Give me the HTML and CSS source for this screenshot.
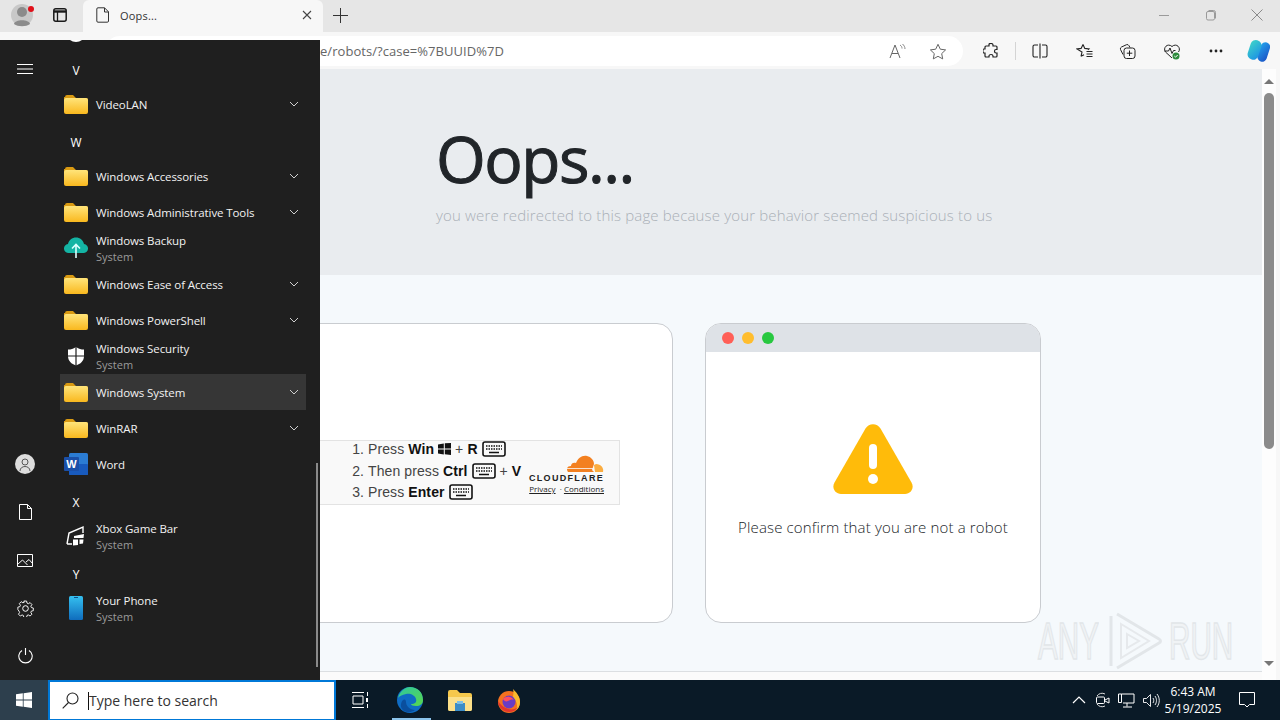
FILE: index.html
```html
<!DOCTYPE html>
<html lang="en">
<head>
    <meta charset="UTF-8">
    <title>Oops...</title>
    <link rel="stylesheet" href="styles.css">
</head>
<body>
    <svg class="defs" width="0" height="0">
        <defs>
            <linearGradient id="folderFill" x1="0" y1="0" x2="0" y2="1">
                <stop offset="0" stop-color="#ffe47a"/>
                <stop offset="1" stop-color="#f9b81e"/>
            </linearGradient>
            <symbol id="folder" viewBox="0 0 24 20">
                <path d="M1 3a2 2 0 0 1 2-2h6l3 3h10a2 2 0 0 1 2 2v4H0V3z" fill="#d99a12"/>
                <rect x="0" y="4" width="24" height="16" rx="2" fill="url(#folderFill)"/>
            </symbol>
            <symbol id="chevron" viewBox="0 0 10 6">
                <path d="M1 1l4 4 4-4" fill="none" stroke="#cfcfcf" stroke-width="1"/>
            </symbol>
            <symbol id="keyboard" viewBox="0 0 24 16">
                <rect x="1" y="1" width="22" height="14" rx="2" fill="none" stroke="#111" stroke-width="1.6"/>
                <path d="M4 5h16M4 8h16" stroke="#111" stroke-width="1.4" stroke-dasharray="1.5 1"/>
                <path d="M7 11.5h10" stroke="#111" stroke-width="1.5"/>
            </symbol>
        </defs>
    </svg>

    <div class="tabstrip">
        <div class="profile">
            <svg width="24" height="28" viewBox="0 0 24 28"><circle cx="11" cy="14" r="11" fill="#c8c8c8"/><circle cx="11" cy="11" r="5" fill="#8b8b8b"/><path d="M3 23c1-5 15-5 16 0-4 3-12 3-16 0z" fill="#8b8b8b"/></svg>
            <span class="profile-dot"></span>
        </div>
        <svg class="tab-actions" width="16" height="16" viewBox="0 0 16 16"><rect x="1.8" y="1.8" width="12.4" height="12.4" rx="2" fill="none" stroke="#1a1a1a" stroke-width="1.5"/><path d="M2 4.5h12" stroke="#1a1a1a" stroke-width="2.4"/><path d="M5.5 5v9" stroke="#1a1a1a" stroke-width="1.3"/></svg>
        <div class="tab">
            <svg width="14" height="16" viewBox="0 0 14 16"><path d="M2 .8h6.5l4 4V14a1.2 1.2 0 0 1-1.2 1.2H2A1.2 1.2 0 0 1 .8 14V2A1.2 1.2 0 0 1 2 .8zM8.500 .8V5h4" fill="none" stroke="#333" stroke-width="1"/></svg>
            <span class="tab-title">Oops...</span>
            <svg class="tab-close" width="10" height="10" viewBox="0 0 10 10"><path d="M1 1l8 8M9 1l-8 8" stroke="#444" stroke-width="1.1"/></svg>
        </div>
        <svg class="new-tab" width="15" height="15" viewBox="0 0 15 15"><path d="M7.500 0v15M0 7.500h15" stroke="#333" stroke-width="1"/></svg>
        <div class="window-buttons">
            <svg width="12" height="12" viewBox="0 0 12 12"><path d="M1 6.500h10" stroke="#9a9a9a"/></svg>
            <svg width="12" height="12" viewBox="0 0 12 12"><rect x="1.500" y="2.500" width="8" height="8.500" rx="1.500" fill="none" stroke="#9a9a9a"/><path d="M3.500 1.500h5a2 2 0 0 1 2 2v6" fill="none" stroke="#9a9a9a"/></svg>
            <svg class="win-close" width="12" height="12" viewBox="0 0 12 12"><path d="M.5.5l11 11M11.500.5l-11 11" stroke="#8a8a8a"/></svg>
        </div>
    </div>

    <div class="toolbar">
        <div class="address">
            <span class="url">e/robots/?case=%7BUUID%7D</span>
            <svg class="address-icon read" width="18" height="16" viewBox="0 0 18 16"><path d="M1 15L6 2l5 13M3 10.500h6" fill="none" stroke="#666" stroke-width="1"/><path d="M11 2c1.500 1 2 2 2 3.500M13.500 1c1.500 1.300 2.500 3 2.500 5" fill="none" stroke="#888"/></svg>
            <svg class="address-icon" width="18" height="17" viewBox="0 0 18 17"><path d="M9 1.300l2.300 4.900 5.300.7-3.900 3.700 1 5.300L9 13.300l-4.700 2.600 1-5.300L1.400 6.900l5.300-.7z" fill="none" stroke="#666" stroke-width="1"/></svg>
        </div>
        <div class="toolbar-icons">
            <svg class="tool-puzzle" width="16" height="16" viewBox="0 0 16 16"><path d="M6 1.500c0-1.500 4-1.500 4 .5v1h3a1 1 0 0 1 1 1v2.500h-1c-2 0-2 3.500 0 3.500h1v3a1 1 0 0 1-1 1h-3v-1c0-2-4-2-4 0v1H3a1 1 0 0 1-1-1v-3H1c-1.500 0-1.500-4 0-4h1V4a1 1 0 0 1 1-1h3z" fill="none" stroke="#222" stroke-width="1.200"/></svg>
            <span class="tool-sep"></span>
            <svg class="tool-split" width="16" height="16" viewBox="0 0 16 16"><path d="M6 2H2.500A1.500 1.500 0 0 0 1 3.500v9A1.500 1.500 0 0 0 2.500 14H6M10 2h3.500A1.500 1.500 0 0 1 15 3.500v9a1.500 1.500 0 0 1-1.500 1.500H10M8 .5v15" fill="none" stroke="#222" stroke-width="1.100"/></svg>
            <svg class="tool-favs" width="17" height="16" viewBox="0 0 17 16"><path d="M7 1.500l1.800 3.900 4.200.5-1 1M5 13.300L6 9 .9 6l4.200-.6L7 1.500M5 13.300l3-1.600" fill="none" stroke="#222" stroke-width="1.100"/><path d="M10.500 8.500h6M10.500 11h6M10.500 13.500h6" stroke="#222"/></svg>
            <svg class="tool-coll" width="17" height="16" viewBox="0 0 17 16"><path d="M4 11.500L1.500 6.500a2 2 0 0 1 1-2.500l5-2.300a2 2 0 0 1 2.500 1L11 4.500" fill="none" stroke="#222"/><rect x="5" y="5" width="11" height="10.500" rx="2.500" fill="#f7f7f7" stroke="#222"/><path d="M10.500 7.500v5.500M7.800 10.200h5.500" stroke="#222"/></svg>
            <svg class="tool-health" width="18" height="17" viewBox="0 0 18 17"><path d="M9 15L2.500 9C-.5 5 4.500-.5 9 3.500 13.500-.5 18.500 5 15.500 9" fill="none" stroke="#222"/><path d="M1.500 8h4l1.500-3 2 5.500 1.500-3h2" fill="none" stroke="#222"/><circle cx="13" cy="13" r="3.500" fill="#2e8b3d"/><path d="M11.300 13l1.200 1.200 2.200-2.200" fill="none" stroke="#fff"/></svg>
            <svg class="tool-more" width="14" height="4" viewBox="0 0 14 4"><circle cx="2" cy="2" r="1.400" fill="#222"/><circle cx="7" cy="2" r="1.400" fill="#222"/><circle cx="12" cy="2" r="1.400" fill="#222"/></svg>
            <svg class="tool-copilot" width="24" height="24" viewBox="0 0 24 24">
                <defs>
                    <linearGradient id="copA" x1="0" y1="0" x2="1" y2="1"><stop offset="0" stop-color="#3fd6c8"/><stop offset="1" stop-color="#1b8fe6"/></linearGradient>
                    <linearGradient id="copB" x1="0" y1="0" x2="1" y2="1"><stop offset="0" stop-color="#22a5ee"/><stop offset="1" stop-color="#1a4fc4"/></linearGradient>
                </defs>
                <rect x="13" y="3" width="9.500" height="20" rx="4.700" transform="rotate(18 18 13)" fill="url(#copB)"/>
                <rect x="3" y="1" width="11" height="20" rx="5.200" transform="rotate(18 9 11)" fill="url(#copA)"/>
            </svg>
        </div>
    </div>

    <div class="viewport">
        <div class="page">
            <div class="hero">
                <h1>Oops...</h1>
                <p class="lead">you were redirected to this page because your behavior seemed suspicious to us</p>
            </div>
            <div class="cards">
                <div class="card card-captcha">
                    <div class="captcha">
                        <span class="captcha-spinner"></span>
                        <ol class="steps">
                            <li>Press <b>Win</b> <svg class="win-mini" width="13" height="12" viewBox="0 0 13 12"><path d="M0 1.500l5.800-1v5H0zM6.800.3L13 0v5.500H6.800zM0 6.500h5.800v5L0 10.500zM6.800 6.500H13V12l-6.200-.8z" fill="#111"/></svg> + <b>R</b> <svg class="key" width="24" height="16"><use href="#keyboard"/></svg></li>
                            <li>Then press <b>Ctrl</b> <svg class="key" width="24" height="16"><use href="#keyboard"/></svg> + <b>V</b></li>
                            <li>Press <b>Enter</b> <svg class="key" width="24" height="16"><use href="#keyboard"/></svg></li>
                        </ol>
                        <div class="cf">
                            <svg width="38" height="18" viewBox="0 0 38 18"><path d="M28 17H2c-2-3-1-6 3-6 0-3 3-4 5-3 2-5 6-8 11-7 4 1 7 4 7 8l-2 6z" fill="#f38020"/><path d="M29 17h8c1-4-2-8-7-8l-2 1z" fill="#fbad41"/><path d="M0 13.500h27" stroke="#f9f9f9" stroke-width=".8"/></svg>
                            <span class="cf-name">CLOUDFLARE</span>
                            <span class="cf-links"><u>Privacy</u> &nbsp;· <u>Conditions</u></span>
                        </div>
                    </div>
                </div>
                <div class="card card-robot">
                    <div class="card-bar">
                        <span class="dot dot-red"></span>
                        <span class="dot dot-yellow"></span>
                        <span class="dot dot-green"></span>
                    </div>
                    <div class="card-body">
                        <svg width="80" height="70" viewBox="0 0 80 70"><path d="M32.500 4.500c3.400-5.800 11.600-5.800 15 0l31 54c3 5.300-.3 11.500-6.500 11.500H8c-6.200 0-9.500-6.200-6.500-11.500z" fill="#ffbb0a"/><rect x="36" y="20" width="8" height="25" rx="4" fill="#fff"/><circle cx="40" cy="55" r="5" fill="#fff"/></svg>
                        <p>Please confirm that you are not a robot</p>
                    </div>
                </div>
            </div>
        </div>
        <div class="scrollbar">
            <span class="arrow-up"></span>
            <span class="thumb"></span>
            <span class="arrow-down"></span>
        </div>
        <div class="window-edge"></div>

        <div class="watermark">
            <span>ANY</span>
            <svg width="56" height="62" viewBox="0 0 56 62"><path d="M4 6v50M10 4l42 25c2 1 2 3 0 4L10 58" fill="none" stroke="#e2e6e9" stroke-width="3"/><path d="M14 14l28 17-28 17zM20 24l12 7-12 7z" fill="none" stroke="#e6e9ec" stroke-width="2"/></svg>
            <span>RUN</span>
        </div>
    </div>

    <div class="start-menu">
        <div class="rail">
            <svg class="rail-burger" width="16" height="10" viewBox="0 0 16 10"><path d="M0 .5h16M0 5h16M0 9.500h16" stroke="#fff"/></svg>
            <div class="rail-bottom">
                <span class="rail-btn"><span class="avatar"><svg width="12" height="13" viewBox="0 0 12 13"><circle cx="6" cy="4" r="3" fill="none" stroke="#555"/><path d="M1 13c0-6 10-6 10 0" fill="none" stroke="#555"/></svg></span></span>
                <span class="rail-btn"><svg width="13" height="16" viewBox="0 0 13 16"><path d="M.5.500h8l4 4v11H.5zM8.500.5v4h4" fill="none" stroke="#fff"/></svg></span>
                <span class="rail-btn"><svg width="16" height="13" viewBox="0 0 16 13"><path d="M.5.500h15v12H.5zM1 10l4.500-4 5 5M9 8l3-2.500 3.500 4" fill="none" stroke="#fff"/></svg></span>
                <span class="rail-btn"><svg width="17" height="17" viewBox="0 0 17 17"><circle cx="8.500" cy="8.500" r="2.800" fill="none" stroke="#fff"/><path d="M7 .7h3l.4 2.200 1.500.7 1.900-1.200 2 2.100-1.200 1.800.6 1.500 2.100.5v2.900l-2.100.4-.6 1.500 1.200 1.900-2 2-1.900-1.200-1.500.6-.4 2.200H7l-.5-2.200-1.400-.6-1.900 1.200-2-2 1.200-1.900-.7-1.500L.5 10V7.300l2.200-.5.600-1.500L2.100 3.500l2-2.100L6 2.600l1.500-.6z" transform="translate(.4 .4) scale(.92)" fill="none" stroke="#fff"/></svg></span>
                <span class="rail-btn"><svg width="15" height="16" viewBox="0 0 15 16"><path d="M7.500 0v7M4 2.500a6.700 6.700 0 1 0 7 0" fill="none" stroke="#fff" stroke-width="1.100"/></svg></span>
            </div>
        </div>
        <div class="app-list">
            <span class="clipped-icon"></span>
            <div class="letter">V</div>
            <div class="app"><svg class="app-icon" width="24" height="20"><use href="#folder"/></svg><span class="app-name">VideoLAN</span><svg class="chev" width="10" height="6"><use href="#chevron"/></svg></div>
            <div class="letter">W</div>
            <div class="app"><svg class="app-icon" width="24" height="20"><use href="#folder"/></svg><span class="app-name">Windows Accessories</span><svg class="chev" width="10" height="6"><use href="#chevron"/></svg></div>
            <div class="app"><svg class="app-icon" width="24" height="20"><use href="#folder"/></svg><span class="app-name">Windows Administrative Tools</span><svg class="chev" width="10" height="6"><use href="#chevron"/></svg></div>
            <div class="app">
                <svg class="app-icon" width="24" height="22" viewBox="0 0 24 22"><path d="M6 16H5a4.500 4.500 0 0 1-1-9C5 3 8 .5 12 .5s7 2.500 8 6.500a4.500 4.500 0 0 1-1 9z" fill="#14b4a4"/><path d="M12 21V8M8 11.500L12 7.500l4 4" fill="none" stroke="#dff" stroke-width="1.600"/></svg>
                <span class="app-text"><span class="app-name">Windows Backup</span><span class="app-sub">System</span></span>
            </div>
            <div class="app"><svg class="app-icon" width="24" height="20"><use href="#folder"/></svg><span class="app-name">Windows Ease of Access</span><svg class="chev" width="10" height="6"><use href="#chevron"/></svg></div>
            <div class="app"><svg class="app-icon" width="24" height="20"><use href="#folder"/></svg><span class="app-name">Windows PowerShell</span><svg class="chev" width="10" height="6"><use href="#chevron"/></svg></div>
            <div class="app">
                <svg class="app-icon" width="24" height="20" viewBox="0 0 24 20"><path d="M12 1c3 2 5 2.500 8 2.500V10c0 5-3.500 8-8 9.500C7.500 18 4 15 4 10V3.500C7 3.500 9 3 12 1z" fill="#fff"/><path d="M12 1v19M4 10h16" stroke="#1f1f1f" stroke-width="1.200"/></svg>
                <span class="app-text"><span class="app-name">Windows Security</span><span class="app-sub">System</span></span>
            </div>
            <div class="app app-hover"><svg class="app-icon" width="24" height="20"><use href="#folder"/></svg><span class="app-name">Windows System</span><svg class="chev" width="10" height="6"><use href="#chevron"/></svg></div>
            <div class="app"><svg class="app-icon" width="24" height="20"><use href="#folder"/></svg><span class="app-name">WinRAR</span><svg class="chev" width="10" height="6"><use href="#chevron"/></svg></div>
            <div class="app">
                <svg class="app-icon" width="24" height="24" viewBox="0 0 24 24"><rect x="5" y="1" width="19" height="22" rx="1.500" fill="#2b7cd3"/><rect x="5" y="12" width="19" height="11" rx="1" fill="#185abd"/><rect x="0" y="5" width="15" height="14" rx="1" fill="#1a4fa8"/><text x="7.500" y="16" text-anchor="middle" class="word-w">W</text></svg>
                <span class="app-name">Word</span>
            </div>
            <div class="letter">X</div>
            <div class="app">
                <svg class="app-icon" width="24" height="24" viewBox="0 0 24 24"><path d="M3 20l2-11L19 3v6M3 20h5" fill="none" stroke="#fff" stroke-width="1.400"/><path d="M10 12l10-2-.5 4H10zM9 15.500h5V21l-5 .5zM15.500 15.500h4l-.5 4-3.500.5z" fill="#fff"/></svg>
                <span class="app-text"><span class="app-name">Xbox Game Bar</span><span class="app-sub">System</span></span>
            </div>
            <div class="letter">Y</div>
            <div class="app">
                <svg class="app-icon" width="24" height="26" viewBox="0 0 24 26">
                    <defs><linearGradient id="phoneFill" x1="0" y1="0" x2="0" y2="1"><stop offset="0" stop-color="#35c0f0"/><stop offset="1" stop-color="#0f6cbd"/></linearGradient></defs>
                    <rect x="5" y="1" width="14" height="24" rx="1.500" fill="url(#phoneFill)"/><path d="M10 2.500h4" stroke="#0e4f86"/>
                </svg>
                <span class="app-text"><span class="app-name">Your Phone</span><span class="app-sub">System</span></span>
            </div>
        </div>
        <span class="menu-scroll"></span>
    </div>

    <div class="taskbar">
        <div class="start-btn">
            <svg width="16" height="16" viewBox="0 0 16 16"><path d="M0 2.300l6.800-1v6.200H0zM7.600 1.200L16 0v7.500H7.600zM0 8.400h6.800v6.300L0 13.700zM7.600 8.400H16V16l-8.400-1.200z" fill="#fff"/></svg>
        </div>
        <div class="search">
            <svg width="17" height="17" viewBox="0 0 17 17"><circle cx="10.500" cy="6.500" r="5.500" fill="none" stroke="#222" stroke-width="1.100"/><path d="M6.500 10.500L.7 16.300" stroke="#222" stroke-width="1.100"/></svg>
            <span class="caret"></span>
            <span class="search-text">Type here to search</span>
        </div>
        <div class="task-icons">
            <span class="task-btn task-view">
                <svg width="16" height="16" viewBox="0 0 16 16"><path d="M0 .5h12M0 15.500h12M1 4h10v8H1zM15.500 0v4M15.500 12v4" fill="none" stroke="#fff"/><rect x="14" y="6" width="2" height="4" fill="#fff"/></svg>
            </span>
            <span class="task-btn task-active">
                <svg width="26" height="26" viewBox="0 0 26 26">
                    <defs><linearGradient id="edgeA" x1="0" y1="0" x2="1" y2="1"><stop offset="0" stop-color="#2fc7a0"/><stop offset="1" stop-color="#58d64e"/></linearGradient></defs>
                    <circle cx="13" cy="13" r="13" fill="#0f6cc4"/>
                    <path d="M1 11C3 4 8 0 13 0c7 0 13 5 13 13 0 4-3 6-7 6-3 0-5-1-5-2 4 0 6-2 5-5-1-4-6-6-10-5-4 1-7 2-8 4z" fill="url(#edgeA)"/>
                    <path d="M9 15c0 4 4 8 9 8-4 3-10 3-13-1-2-3-1-7 1-9 1-1 3-1 3 2z" fill="#0a4f9e"/>
                </svg>
            </span>
            <span class="task-btn">
                <svg width="24" height="22" viewBox="0 0 24 22"><path d="M0 3a2 2 0 0 1 2-2h7l3 3h10a2 2 0 0 1 2 2v14a2 2 0 0 1-2 2H2a2 2 0 0 1-2-2z" fill="#f5c84c"/><path d="M0 8h24v12a2 2 0 0 1-2 2H2a2 2 0 0 1-2-2z" fill="#fbe08a"/><rect x="7" y="14" width="10" height="8" fill="#3b8dc8"/><rect x="9" y="12" width="6" height="3" fill="#7cc0e8"/></svg>
            </span>
            <span class="task-btn">
                <svg width="24" height="25" viewBox="0 0 24 25"><circle cx="12" cy="14" r="11" fill="#f4711f"/><path d="M16 1c3 3 7 7 7 13 0 4-2 7-4 8 2-4 1-9-3-12 0-3 1-6 0-9z" fill="#fbb92d"/><circle cx="12" cy="14" r="6.500" fill="#6a3cc4"/><path d="M6 11c3-3 8-3 11 1-2-1-4 0-6 1-2 1-4 0-5-2z" fill="#ff4f5e"/><path d="M1 13c0 6 5 11 11 11 4 0 7-2 9-5-3 3-9 3-12 1-3-1-6-4-8-7z" fill="#e3362c"/></svg>
            </span>
        </div>
        <div class="tray">
            <svg class="tray-chevron" width="14" height="8" viewBox="0 0 14 8"><path d="M1 7l6-6 6 6" fill="none" stroke="#fff" stroke-width="1.200"/></svg>
            <svg class="tray-icon" width="14" height="16" viewBox="0 0 14 16"><path d="M1 4a6 6 0 0 1 8-2M1 12a6 6 0 0 0 8 2" fill="none" stroke="#ddd"/><rect x=".5" y="5" width="8" height="6.500" rx="1" fill="none" stroke="#fff"/><path d="M9 8l4-2v5l-4-2" fill="none" stroke="#fff"/></svg>
            <svg class="tray-icon" width="17" height="15" viewBox="0 0 17 15"><path d="M3.500 1H16v9H5M.5 1h3v8.500h-3zM9 10v3.500M5 14h9" fill="none" stroke="#fff"/></svg>
            <svg class="tray-icon" width="17" height="15" viewBox="0 0 17 15"><path d="M.5 5.500h3L7.500 1.500v12l-4-4h-3zM10 5c1 1.500 1 3.500 0 5M12 3c2 3 2 6 0 9M14 1c3 4 3 9 0 13" fill="none" stroke="#fff" stroke-width=".9"/></svg>
            <div class="clock"><span>6:43 AM</span><span>5/19/2025</span></div>
            <svg class="tray-note" width="16" height="16" viewBox="0 0 16 16"><path d="M.5.500h15v12h-5L8 15l-2.500-2.500h-5z" fill="none" stroke="#fff"/></svg>
        </div>
    </div>
</body>
</html>
```

FILE: styles.css
```css
* {
    box-sizing: border-box;
}

html, body {
    margin: 0;
    height: 100%;
}

body {
    width: 1280px;
    height: 720px;
    overflow: hidden;
    position: relative;
    display: flex;
    flex-direction: column;
    font-family: "Open Sans", "Noto Sans", sans-serif;
}

.defs {
    position: absolute;
}

/* browser chrome */
.tabstrip {
    height: 32px;
    flex: none;
    padding-bottom: 2px;
    display: flex;
    align-items: center;
    background: #e6e6e6;
}

.profile {
    width: 52px;
    padding-left: 11px;
    position: relative;
    display: flex;
}

.profile-dot {
    position: absolute;
    left: 28px;
    top: 5px;
    width: 6px;
    height: 6px;
    border-radius: 50%;
    background: #e0101a;
}

.tab-actions {
    flex: none;
}

.tab {
    width: 240px;
    height: 32px;
    margin-left: 15px;
    padding: 0 11px 2px 13px;
    align-self: flex-start;
    display: flex;
    align-items: center;
    background: #f7f7f7;
    border-radius: 6px 6px 0 0;
}

.tab-title {
    margin-left: 10px;
    font-size: 11px;
    letter-spacing: .2px;
    color: #333;
    flex: 1;
}

.new-tab {
    margin-left: 10px;
}

.window-buttons {
    margin-left: auto;
    padding-right: 17px;
    display: flex;
    gap: 35px;
}

.win-close {
    margin-left: -1px;
}

.toolbar {
    height: 37px;
    flex: none;
    padding-top: 1px;
    display: flex;
    align-items: center;
    background: #f7f7f7;
}

.address {
    width: 858px;
    height: 30px;
    margin-left: 105px;
    padding-right: 16px;
    display: flex;
    align-items: center;
    background: #fff;
    border-radius: 15px;
}

.url {
    margin-left: 215px;
    margin-right: auto;
    font-size: 13px;
    letter-spacing: .05px;
    color: #666;
}

.read {
    margin-right: 22px;
}

.toolbar-icons {
    flex: 1;
    display: flex;
    align-items: center;
}

.tool-puzzle { margin-left: 20px; }
.tool-sep { width: 1px; height: 18px; margin-left: 16px; background: #d4d4d4; }
.tool-split { margin-left: 16px; }
.tool-favs { margin-left: 28px; }
.tool-coll { margin-left: 26px; }
.tool-health { margin-left: 27px; }
.tool-more { margin-left: 28px; }
.tool-copilot { margin-left: 23px; }

/* page inside the browser */
.viewport {
    height: 611px;
    flex: none;
    position: relative;
    display: flex;
}

.page {
    width: 1262px;
    display: flex;
    flex-direction: column;
    background: #fbfbfb;
}

.hero {
    height: 206px;
    flex: none;
    padding: 50px 0 0 436px;
    background: #e9ecef;
}

.hero h1 {
    margin: 0;
    font-size: 64px;
    line-height: 80px;
    font-weight: 400;
    letter-spacing: -1.500px;
    -webkit-text-stroke: 1px #212529;
    color: #212529;
}

.lead {
    margin: 6px 0 0;
    font-size: 15px;
    line-height: 20px;
    font-weight: 300;
    letter-spacing: .15px;
    color: #a9b0b7;
}

.cards {
    height: 397px;
    flex: none;
    padding: 48px 0 0 100px;
    display: flex;
    gap: 32px;
    background: #f5f9fc;
    border-bottom: 1px solid #dcdfe2;
}

.card {
    height: 300px;
    background: #fff;
    border: 1px solid #c9ccd0;
    border-radius: 16px;
    overflow: hidden;
}

.card-captcha {
    width: 573px;
    padding-right: 52px;
    display: flex;
    align-items: center;
    justify-content: flex-end;
}

.captcha {
    width: 420px;
    height: 65px;
    margin-top: -1px;
    padding-left: 145px;
    position: relative;
    display: flex;
    background: #f9f9f9;
    border: 1px solid #e3e3e3;
    font-family: "Liberation Sans", sans-serif;
}

.captcha-spinner {
    position: absolute;
    left: 92px;
    top: 21px;
    width: 22px;
    height: 22px;
    border-radius: 50%;
    background: #555;
}

.steps {
    margin: -2px 0 0;
    padding: 0 0 0 22px;
    font-size: 14px;
    line-height: 21.500px;
    letter-spacing: .1px;
    color: #444;
    white-space: nowrap;
}

.steps b {
    color: #111;
}

.key {
    vertical-align: -3px;
}

.win-mini {
    vertical-align: -1px;
}

.cf {
    position: absolute;
    right: 15px;
    top: 14px;
    display: flex;
    flex-direction: column;
    align-items: flex-end;
}

.cf-name {
    font-size: 9px;
    line-height: 10px;
    font-weight: bold;
    letter-spacing: 1.300px;
    color: #222;
}

.cf-links {
    font-family: "Open Sans", sans-serif;
    font-size: 8px;
    line-height: 11px;
    color: #222;
    white-space: nowrap;
}

.card-robot {
    width: 336px;
}

.card-bar {
    height: 28px;
    padding-left: 16px;
    display: flex;
    align-items: center;
    gap: 8px;
    background: #dee2e7;
}

.dot {
    width: 12px;
    height: 12px;
    border-radius: 50%;
}

.dot-red { background: #ff5f57; }
.dot-yellow { background: #ffbd2e; }
.dot-green { background: #28c840; }

.card-body {
    padding-top: 72px;
    display: flex;
    flex-direction: column;
    align-items: center;
}

.card-body p {
    margin: 22px 0 0;
    font-size: 15px;
    line-height: 22px;
    font-weight: 300;
    letter-spacing: .15px;
    color: #212529;
}

.scrollbar {
    width: 14px;
    position: relative;
    background: #fdfdfd;
}

.arrow-up,
.arrow-down {
    position: absolute;
    left: 2px;
    width: 0;
    height: 0;
    border-left: 5px solid transparent;
    border-right: 5px solid transparent;
}

.arrow-up {
    top: 10px;
    border-bottom: 5px solid #777;
}

.arrow-down {
    bottom: 14px;
    border-top: 5px solid #777;
}

.thumb {
    position: absolute;
    left: 2px;
    top: 24px;
    width: 10px;
    height: 356px;
    border-radius: 5px;
    background: #8b8b8b;
}

.window-edge {
    width: 4px;
    background: #f7f7f7;
}

.watermark {
    position: absolute;
    left: 1038px;
    top: 541px;
    width: 194px;
    display: flex;
    align-items: center;
    font-family: "Liberation Sans", sans-serif;
    font-size: 52px;
    color: #f0f3f5;
    -webkit-text-stroke: 1.500px #e2e6e9;
}

.watermark span {
    width: 69px;
    flex: none;
    white-space: nowrap;
    transform: scaleX(.57);
    transform-origin: left center;
}

.watermark svg {
    flex: none;
}

.watermark svg + span {
    margin-left: 6px;
}

/* start menu lies over the browser */
.start-menu {
    position: absolute;
    left: 0;
    top: 40px;
    width: 320px;
    height: 640px;
    display: flex;
    overflow: hidden;
    background: #1f1f1f;
    color: #fff;
}

.rail {
    width: 50px;
    flex: none;
    display: flex;
    flex-direction: column;
    justify-content: space-between;
    align-items: center;
    padding-top: 24px;
}

.rail-btn {
    height: 48px;
    width: 50px;
    display: flex;
    align-items: center;
    justify-content: center;
}

.avatar {
    width: 20px;
    height: 20px;
    display: flex;
    align-items: center;
    justify-content: center;
    border-radius: 50%;
    background: #ddd;
}

.app-list {
    width: 246px;
    margin-left: 10px;
    padding-top: 10px;
    position: relative;
}

.clipped-icon {
    position: absolute;
    left: 6px;
    top: -18px;
    width: 20px;
    height: 20px;
    border-radius: 50%;
    background: #fff;
}

.letter {
    width: 32px;
    height: 32px;
    margin-top: 4px;
    display: flex;
    align-items: center;
    justify-content: center;
    font-size: 12px;
}

.app {
    height: 36px;
    padding: 0 6px 0 4px;
    display: flex;
    align-items: center;
}

.app-hover {
    background: #363636;
}

.app-icon {
    width: 24px;
    flex: none;
    margin-right: 8px;
}

.app-name {
    display: block;
    font-size: 11.500px;
    line-height: 16px;
    letter-spacing: -.1px;
    color: #f2f2f2;
    white-space: nowrap;
}

.app > .app-name,
.app-text {
    margin-top: 2px;
}

.app-text {
    display: flex;
    flex-direction: column;
}

.app-sub {
    font-size: 11px;
    line-height: 16px;
    color: #9a9a9a;
}

.chev {
    margin-left: auto;
    margin-right: 1px;
}

.word-w {
    font-family: "Liberation Sans", sans-serif;
    font-size: 11px;
    font-weight: bold;
    fill: #fff;
}

.menu-scroll {
    position: absolute;
    right: 2px;
    top: 423px;
    width: 2px;
    height: 204px;
    background: #8a8a8a;
}

/* taskbar */
.taskbar {
    height: 40px;
    flex: none;
    display: flex;
    align-items: center;
    background: #0a1a27;
}

.start-btn {
    width: 48px;
    height: 40px;
    display: flex;
    align-items: center;
    justify-content: center;
    background: #2d3f4d;
}

.search {
    width: 288px;
    height: 40px;
    padding-left: 12px;
    display: flex;
    align-items: center;
    background: #fff;
    border: 2px solid #0078d7;
    border-bottom-width: 1px;
}

.caret {
    width: 1px;
    height: 18px;
    margin-left: 9px;
    background: #111;
}

.search-text {
    font-size: 14px;
    color: #333;
}

.task-icons {
    display: flex;
}

.task-btn {
    width: 49.500px;
    height: 40px;
    position: relative;
    display: flex;
    align-items: center;
    justify-content: center;
}

.task-view {
    margin-left: -1px;
    margin-right: 1px;
}

.task-active::after {
    content: '';
    position: absolute;
    left: 6px;
    right: 4px;
    bottom: 0;
    height: 2px;
    background: #8cc4ec;
}

.tray {
    flex: 1;
    display: flex;
    align-items: center;
    justify-content: flex-end;
    color: #fff;
}

.tray-chevron {
    margin-right: 2px;
}

.tray-icon {
    margin-left: 8px;
}

.clock {
    width: 64px;
    margin-left: 1px;
    display: flex;
    flex-direction: column;
    align-items: center;
    font-size: 12px;
    line-height: 17px;
}

.tray-note {
    margin: 0 25px 0 14px;
}
```
